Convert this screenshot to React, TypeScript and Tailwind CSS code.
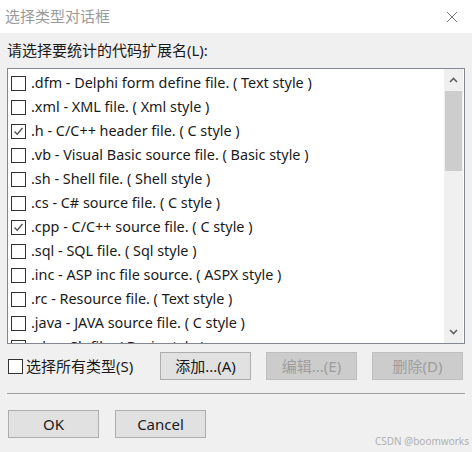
import React from "react";

const rows: { text: string; checked?: boolean }[] = [
  { text: ".dfm - Delphi form define file. ( Text style )" },
  { text: ".xml - XML file. ( Xml style )" },
  { text: ".h - C/C++ header file. ( C style )", checked: true },
  { text: ".vb - Visual Basic source file. ( Basic style )" },
  { text: ".sh - Shell file. ( Shell style )" },
  { text: ".cs - C# source file. ( C style )" },
  { text: ".cpp - C/C++ source file. ( C style )", checked: true },
  { text: ".sql - SQL file. ( Sql style )" },
  { text: ".inc - ASP inc file source. ( ASPX style )" },
  { text: ".rc - Resource file. ( Text style )" },
  { text: ".java - JAVA source file. ( C style )" },
  { text: ".vbs - Sh file. ( Basic style )" },
];

const font = { fontFamily: '"Noto Sans", "Noto Sans CJK SC", sans-serif' };

// Win32-style checkbox
const Check: React.FC<{ checked?: boolean }> = ({ checked }) => (
  <div className="w-[15px] h-[15px] border border-[#333333] bg-white flex items-center justify-center shrink-0">
    {checked && (
      <svg width="11" height="11" viewBox="0 0 11 11">
        <path d="M1.5 5.5 L4.2 8.3 L9.5 2" fill="none" stroke="#555555" strokeWidth="1.4" />
      </svg>
    )}
  </div>
);

const Button: React.FC<{ label: string; disabled?: boolean; className?: string }> = ({
  label,
  disabled,
  className = "",
}) => (
  <div
    className={`h-[28px] w-[91px] flex items-center justify-center text-[15px] border ${
      disabled
        ? "bg-[#cccccc] border-[#bfbfbf] text-[#9d9d9d]"
        : "bg-[#e1e1e1] border-[#adadad] text-[#1a1a1a]"
    } ${className}`}
  >
    {label}
  </div>
);

export default function App() {
  return (
    <div className="w-[472px] h-[452px] bg-[#f0f0f0] flex flex-col overflow-hidden" style={font}>
      {/* Title bar */}
      <div className="h-[33px] bg-white flex items-center justify-between pl-[5px] pr-[14px] shrink-0">
        <span className="text-[15px] text-[#9a9a9a]">选择类型对话框</span>
        <svg width="12" height="12" viewBox="0 0 12 12">
          <path d="M1 1 L11 11 M11 1 L1 11" stroke="#777777" strokeWidth="1" />
        </svg>
      </div>

      <div className="flex flex-col px-[7px] pt-[6px]">
        <div className="text-[15px] text-[#1a1a1a] h-[23px] leading-[23px]">
          请选择要统计的代码扩展名(L):
        </div>

        {/* List box */}
        <div className="mt-[6px] h-[276px] w-[458px] border border-[#828790] bg-white flex overflow-hidden">
          <div className="flex-1 flex flex-col pt-[2px] pl-[3px] overflow-hidden">
            {rows.map((r) => (
              <div key={r.text} className="h-[24px] flex items-center gap-[5px] shrink-0">
                <Check checked={r.checked} />
                <span className="text-[14.4px] text-[#1a1a1a] whitespace-nowrap">{r.text}</span>
              </div>
            ))}
          </div>
          <div className="w-[19px] bg-[#f0f0f0] flex flex-col items-center shrink-0 mr-[1px]">
            <div className="h-[22px] flex items-center justify-center">
              <svg width="9" height="6" viewBox="0 0 9 6">
                <path d="M1 5 L4.5 1.5 L8 5" fill="none" stroke="#606060" strokeWidth="1.6" />
              </svg>
            </div>
            <div className="w-[17px] h-[80px] bg-[#cdcdcd]" />
            <div className="flex-1" />
            <div className="h-[22px] flex items-center justify-center">
              <svg width="9" height="6" viewBox="0 0 9 6">
                <path d="M1 1 L4.5 4.5 L8 1" fill="none" stroke="#606060" strokeWidth="1.6" />
              </svg>
            </div>
          </div>
        </div>

        {/* Select all + actions */}
        <div className="mt-[8px] flex items-center">
          <div className="flex items-center gap-[3px] pl-[1px] w-[153px]">
            <Check />
            <span className="text-[15px] text-[#1a1a1a]">选择所有类型(S)</span>
          </div>
          <Button label="添加...(A)" />
          <Button label="编辑...(E)" disabled className="ml-[15px]" />
          <Button label="删除(D)" disabled className="ml-[15px]" />
        </div>

        <div className="mt-[13px] h-[2px] border-t border-[#a0a0a0] border-b-white" />

        <div className="mt-[15px] flex items-center gap-[16px] pl-[1px]">
          <Button label="OK" />
          <Button label="Cancel" />
        </div>
      </div>

      <div className="flex justify-end pr-[3px] -mt-[4px]">
        <span className="text-[10px] text-[#b0b0b0]">CSDN @boomworks</span>
      </div>
    </div>
  );
}
